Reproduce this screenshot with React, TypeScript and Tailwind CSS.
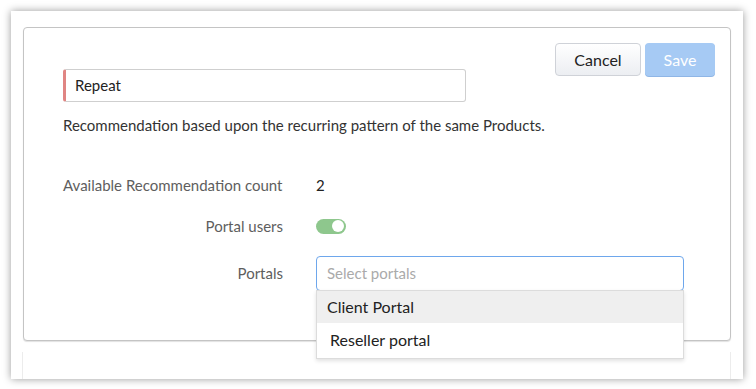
export default function App() {
  return (
    <div className="w-[756px] h-[389px] bg-white pt-[11px] pl-[11px] font-['Lato','Liberation_Sans',sans-serif]">
      <div className="w-[732px] h-[368px] bg-white overflow-hidden shadow-[0_0_8px_rgba(0,0,0,0.4)] pl-[12px] pt-[16px]">
        <div className="relative w-[708px] h-[314px] border border-[#c4c4c4] rounded-[4px] bg-white shadow-[0_1px_1px_rgba(0,0,0,0.12)] pl-[39px] pr-[15px] pt-[15px]">
          <div className="flex justify-between items-start">
            <div className="mt-[26px] w-[403px] h-[33px] border border-[#cfcfcf] border-l-[3px] border-l-[#e08583] rounded-[3px] flex items-center pl-[9px] text-[15px] text-[#222]">
              Repeat
            </div>
            <div className="flex gap-[4px]">
              <button className="w-[86px] h-[33px] rounded-[4px] border border-[#cfd2d8] bg-gradient-to-b from-white to-[#eceef2] text-[16px] text-[#222]">
                Cancel
              </button>
              <button className="w-[70px] h-[33px] rounded-[4px] bg-[#a6caf4] shadow-[0_1px_0_#8fb6e6] text-[16px] text-white">
                Save
              </button>
            </div>
          </div>
          <p className="mt-[13px] text-[15px] leading-[20px] text-[#333]">
            Recommendation based upon the recurring pattern of the same Products.
          </p>

          <div className="mt-[40px] flex items-center h-[20px]">
            <div className="w-[220px] text-[15px] text-[#5e5e5e]">Available Recommendation count</div>
            <div className="ml-[33px] text-[15px] text-[#222]">2</div>
          </div>

          <div className="mt-[21px] flex items-center h-[20px]">
            <div className="w-[220px] text-right text-[15px] text-[#5e5e5e]">Portal users</div>
            <div className="ml-[33px] w-[30px] h-[15px] rounded-full bg-[#8ec78d] flex items-center justify-end pr-[2px]">
              <div className="w-[12px] h-[12px] rounded-full bg-white" />
            </div>
          </div>

          <div className="mt-[20px] flex items-center">
            <div className="w-[220px] text-right text-[15px] text-[#5e5e5e]">Portals</div>
            <div className="relative ml-[33px]">
              <div className="w-[368px] h-[35px] border border-[#6ea7ec] rounded-[4px] flex items-center pl-[10px] text-[15px] text-[#aaa]">
                Select portals
              </div>
              <div className="absolute left-0 top-[34px] w-[368px] bg-white border border-[#dcdcdc] shadow-[0_2px_4px_rgba(0,0,0,0.12)] z-10">
                <div className="h-[32px] bg-[#efefef] flex items-center pl-[10px] text-[16px] text-[#222]">
                  Client Portal
                </div>
                <div className="h-[35px] flex items-center pl-[13px] pb-[2px] text-[16px] text-[#222]">
                  Reseller portal
                </div>
              </div>
            </div>
          </div>
        </div>
        <div className="mt-[11px] w-[709px] h-[40px] -ml-[1px] border-l border-r border-[#ececec]" />
      </div>
    </div>
  );
}
